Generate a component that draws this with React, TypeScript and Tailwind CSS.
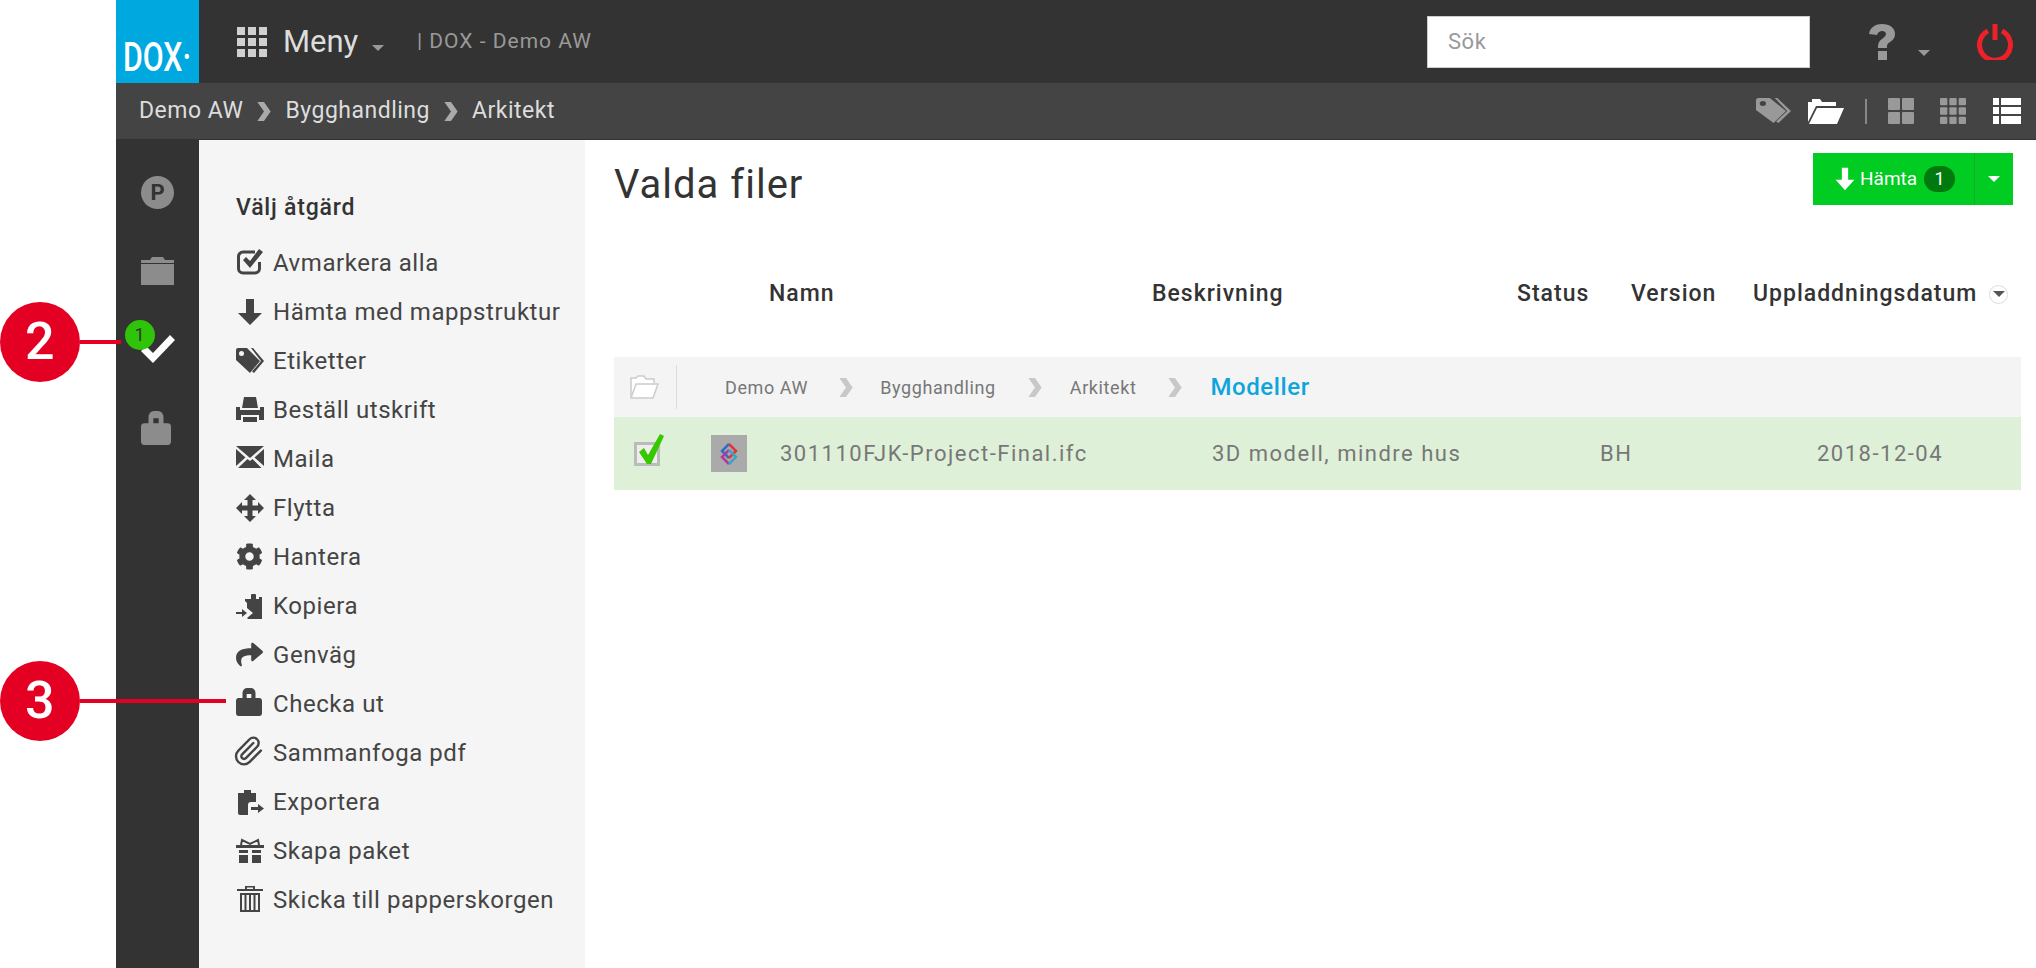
import type { ReactNode } from "react";
import { FaCog, FaShare } from "react-icons/fa";
import { Paperclip } from "lucide-react";

type Action = { label: string; icon: ReactNode };

function Glyph({ children, className = "h-7 w-7" }: { children: ReactNode; className?: string }) {
  return (
    <svg viewBox="0 0 28 28" preserveAspectRatio="none" fill="currentColor" className={"block shrink-0 " + className}>
      {children}
    </svg>
  );
}

const LockIcon = ({ className }: { className?: string }) => (
  <Glyph className={className}>
    <path
      d="M7 10V5a5 5 0 0 1 5-5h4a5 5 0 0 1 5 5v5h4a3 3 0 0 1 3 3v12a3 3 0 0 1-3 3H3a3 3 0 0 1-3-3V13a3 3 0 0 1 3-3Zm4.500 0h5V6h-5Z"
      fillRule="evenodd"
    />
  </Glyph>
);

const DownArrow = ({ className }: { className?: string }) => (
  <Glyph className={className}>
    <path d="M10 1h8v14h8L14 27 2 15h8Z" />
  </Glyph>
);

const TagsIcon = ({ className }: { className?: string }) => (
  <Glyph className={className}>
    <path d="M0 3a2 2 0 0 1 2-2h9l13 13-10 12L0 13Zm5.500 1a2.500 2.500 0 1 0 0 5 2.500 2.500 0 0 0 0-5Z" fillRule="evenodd" />
    <path d="M15 1h2l11 13-10 12-2-1.500L25 14Z" />
  </Glyph>
);

const actions: Action[] = [
  {
    label: "Avmarkera alla",
    icon: (
      <Glyph className="-mt-1 h-7 w-7">
        <path d="M19 5H7a4.500 4.500 0 0 0-4.500 4.500v12A4.500 4.500 0 0 0 7 26h12a4.500 4.500 0 0 0 4.500-4.500V15" fill="none" stroke="currentColor" strokeWidth="3" />
        <path d="M7 13l3-3 4 4 9-12 4 3-13 16Z" />
      </Glyph>
    ),
  },
  { label: "Hämta med mappstruktur", icon: <DownArrow /> },
  { label: "Etiketter", icon: <TagsIcon /> },
  {
    label: "Beställ utskrift",
    icon: (
      <Glyph>
        <path d="M8 1h12l2 11H6Z" />
        <path d="M0 11h4v3h20v-3h4v13h-5v-5H5v5H0Z" />
        <path d="M7 21h14v5H7Z" />
      </Glyph>
    ),
  },
  {
    label: "Maila",
    icon: (
      <Glyph>
        <path d="M0 1h28L14 13Z" />
        <path d="M0 4l9.500 8.500L0 21Z" />
        <path d="M28 4l-9.500 8.500L28 21Z" />
        <path d="M11.500 14l2.500 2 2.500-2 9 9H2Z" />
      </Glyph>
    ),
  },
  {
    label: "Flytta",
    icon: (
      <Glyph>
        <path d="M14 0l6 6h-3.500v5.500H22V8l6 6-6 6v-3.500h-5.500V22H20l-6 6-6-6h3.500v-5.500H6V20l-6-6 6-6v3.500h5.500V6H8Z" />
      </Glyph>
    ),
  },
  { label: "Hantera", icon: <FaCog className="h-[27px] w-[27px]" /> },
  {
    label: "Kopiera",
    icon: (
      <Glyph>
        <path d="M9 7h6V3a1 1 0 0 1 1-1h3a1 1 0 0 1 1 1v4h3V5h3v22H12l-1-1 6-5-6-5V11L9 9Z" />
        <path d="M0 20h6v-3l5 4-5 4v-3H0Z" />
      </Glyph>
    ),
  },
  { label: "Genväg", icon: <FaShare className="h-[27px] w-[27px]" /> },
  { label: "Checka ut", icon: <LockIcon className="-mt-1 h-7 w-[26px]" /> },
  { label: "Sammanfoga pdf", icon: <Paperclip className="-ml-1 -mt-1 h-8 w-8" strokeWidth={1.8} /> },
  {
    label: "Exportera",
    icon: (
      <Glyph>
        <path d="M2 5h6V2h7v3h5v9h-5a3 3 0 0 0-3 3v10H4a2 2 0 0 1-2-2Z" />
        <path d="M15 19h7v-3l6 4.500-6 4.500v-3h-7Z" />
      </Glyph>
    ),
  },
  {
    label: "Skapa paket",
    icon: (
      <Glyph>
        <path d="M0 8h28v3H0Z" />
        <path d="M3 13h9v3H3ZM16 13h9v3h-9ZM3 18h9v8H3ZM16 18h9v8h-9Z" />
        <path d="M5 8l1-5 8 4 8-4 1 5" fill="none" stroke="currentColor" strokeWidth="2" />
      </Glyph>
    ),
  },
  {
    label: "Skicka till papperskorgen",
    icon: (
      <Glyph className="-mt-1 h-7 w-7">
        <path d="M1 5h8V2h10v3h8v2H1ZM11 3.500V5h6V3.500Z" fillRule="evenodd" />
        <path d="M4 9h20v19H4Zm2 2v15h2.500V11Zm4.500 0v15H13V11Zm4.500 0v15h2.500V11Zm4.500 0v15H22V11Z" fillRule="evenodd" />
      </Glyph>
    ),
  },
];

function Caret({ className }: { className: string }) {
  return <span className={"block h-0 w-0 border-x-[6px] border-t-[6px] border-x-transparent " + className} />;
}

function Chevron({ className }: { className: string }) {
  return (
    <svg viewBox="0 0 14 20" className={"block h-[19px] w-[14px] shrink-0 " + className} fill="currentColor">
      <path d="M0 0h7l7 10-7 10H0l7-10Z" />
    </svg>
  );
}

function GridIcon({ n, className }: { n: number; className: string }) {
  const size = 26;
  const gap = 2;
  const cell = (size - gap * (n - 1)) / n;
  const cells = [];
  for (let r = 0; r < n; r++) {
    for (let c = 0; c < n; c++) {
      cells.push(<rect key={r + "-" + c} x={c * (cell + gap)} y={r * (cell + gap)} width={cell} height={cell} rx="1" />);
    }
  }
  return (
    <svg viewBox="0 0 26 26" fill="currentColor" className={"block h-[26px] w-[26px] " + className}>
      {cells}
    </svg>
  );
}

function Callout({ n, lineWidth, className }: { n: number; lineWidth: string; className: string }) {
  return (
    <div className={"absolute left-0 z-10 flex items-center " + className}>
      <div className="flex h-20 w-20 items-center justify-center rounded-full bg-[#e30022] text-[52px] font-medium leading-none text-white">
        {n}
      </div>
      <div className={"h-1 bg-[#e30022] " + lineWidth} />
    </div>
  );
}

export default function App() {
  return (
    <div className="relative flex h-[968px] w-[2036px] overflow-hidden whitespace-nowrap bg-white font-['Roboto','Liberation_Sans',sans-serif] tracking-[0.55px] text-[#333]">
      <Callout n={2} lineWidth="w-[41px]" className="top-[302px]" />
      <Callout n={3} lineWidth="w-[146px]" className="top-[661px]" />

      <div className="ml-[116px] flex min-w-0 flex-1 flex-col">
        <header className="flex h-[83px] items-center bg-[#333] pr-[23px]">
          <div className="flex h-[83px] w-[83px] items-end justify-center overflow-hidden bg-[#00a8e0] pb-[6px] text-[41px] font-medium leading-[40px] tracking-[0px] text-white">
            <span className="inline-block scale-x-[0.74]">DOX·</span>
          </div>
          <svg viewBox="0 0 30 30" fill="#d0d0d0" className="ml-[38px] block h-[30px] w-[30px]">
            <path d="M0 0h8v8H0ZM11 0h8v8h-8ZM22 0h8v8h-8ZM0 11h8v8H0ZM11 11h8v8h-8ZM22 11h8v8h-8ZM0 22h8v8H0ZM11 22h8v8h-8ZM22 22h8v8h-8Z" />
          </svg>
          <span className="ml-4 w-[73px] text-[31px] leading-none tracking-[0px] text-[#ddd]">Meny</span>
          <Caret className="ml-4 mt-[12px] border-t-[#999]" />
          <span className="ml-[33px] text-[21px] leading-none tracking-[1px] text-[#999]">| DOX - Demo AW</span>

          <div className="ml-auto flex h-[52px] w-[383px] items-center border border-[#ccc] bg-white pl-[20px] text-[22px] text-[#999]">
            Sök
          </div>
          <svg viewBox="0 0 28 36" fill="#999" className="ml-[58px] block h-9 w-7">
            <path d="M1 10C2 3 8 0 14 0c8 0 13 4 13 10 0 4-2 6-5 8-3 2-3 3-3 6h-9c0-5 1-7 4-9 2-2 4-3 4-5s-2-3-4-3-4 1-5 4ZM10 27h9v9h-9Z" />
          </svg>
          <Caret className="ml-[22px] mt-[22px] border-t-[#999]" />
          <svg viewBox="0 0 36 36" fill="none" stroke="#ee2028" strokeWidth="5" className="ml-[47px] block h-9 w-9">
            <path d="M11 7a15.500 15.500 0 1 0 14 0" />
            <path d="M18 0v16" />
          </svg>
        </header>

        <div className="flex h-[57px] items-center border-b border-[#333] bg-[#444] pl-[23px] pr-[15px] text-[23px] tracking-[0.5px] text-[#ddd]">
          <span>Demo AW</span>
          <Chevron className="mx-[14px] text-[#aaa]" />
          <span>Bygghandling</span>
          <Chevron className="mx-[14px] text-[#aaa]" />
          <span>Arkitekt</span>
          <div className="ml-auto flex items-center">
            <TagsIcon className="h-[28px] w-[35px] text-[#999]" />
            <svg viewBox="0 0 36 26" fill="white" className="ml-[17px] block h-[26px] w-9">
              <path d="M0 4h4V1h8l2 3h14v4H8L0 24Z" />
              <path d="M9 10h27l-7 16H1Z" />
            </svg>
            <span className="ml-[21px] h-[25px] w-[2px] bg-[#888]" />
            <GridIcon n={2} className="ml-[21px] text-[#999]" />
            <GridIcon n={3} className="ml-[26px] text-[#999]" />
            <svg viewBox="0 0 28 26" fill="white" className="ml-[27px] block h-[26px] w-7">
              <path d="M0 0h6v7H0ZM8 0h20v7H8ZM0 9h6v7H0ZM8 9h20v7H8ZM0 18h6v8H0ZM8 18h20v8H8Z" />
            </svg>
          </div>
        </div>

        <div className="flex min-h-0 flex-1">
          <nav className="flex w-[83px] shrink-0 flex-col items-center bg-[#333] pt-[36px] text-[#8c8c8c]">
            <div className="flex h-[33px] w-[33px] items-center justify-center rounded-full bg-[#8c8c8c] text-[22px] font-bold leading-none tracking-normal text-[#333]">
              P
            </div>
            <svg viewBox="0 0 33 30" fill="currentColor" className="mt-[46px] block h-[30px] w-[33px]">
              <path d="M11 2h11l2 3h9v3H0V5h9Z" />
              <path d="M0 9h33v21H0Z" />
            </svg>
            <div className="relative mt-[50px] h-[28px] w-[34px]">
              <svg viewBox="0 0 34 28" fill="white" className="block h-[28px] w-[34px]">
                <path d="M0 16l5-5 7 7L29 0l5 5-22 23Z" />
              </svg>
              <span className="absolute left-[-16px] top-[-15px] flex h-[30px] w-[30px] items-center justify-center rounded-full bg-[#2fc40a] text-[18px] leading-none tracking-normal text-[#333]">
                1
              </span>
            </div>
            <LockIcon className="ml-[-3px] mt-[48px] h-[34px] w-[30px]" />
          </nav>

          <aside className="w-[386px] shrink-0 bg-[#f5f5f5] pl-[37px] pt-[53px]">
            <h2 className="text-[23px] font-medium leading-[30px] tracking-[0.8px] text-[#333]">Välj åtgärd</h2>
            <ul className="mt-[15px]">
              {actions.map((action) => (
                <li key={action.label} className="flex h-[49px] items-center text-[24px] text-[#444]">
                  <span className="flex w-[37px] shrink-0 justify-start">{action.icon}</span>
                  {action.label}
                </li>
              ))}
            </ul>
          </aside>

          <main className="min-w-0 flex-1 pl-[29px] pr-[15px]">
            <div className="flex items-start justify-between pt-[13px]">
              <h1 className="mt-[7px] text-[40px] font-normal leading-[50px] tracking-[1px] text-[#333]">Valda filer</h1>
              <div className="mr-2 flex h-[52px] w-[200px] bg-[#00cc22] text-white">
                <div className="flex flex-1 items-center border-r border-[#17a82e] pl-[21px]">
                  <DownArrow className="h-[24px] w-[22px]" />
                  <span className="ml-[4px] text-[19px] tracking-[0px]">Hämta</span>
                  <span className="ml-[7px] flex h-[26px] w-[31px] items-center justify-center rounded-full bg-[#007a0e] text-[18px] leading-none tracking-normal">1</span>
                </div>
                <div className="flex w-[38px] items-center justify-center">
                  <Caret className="border-t-white" />
                </div>
              </div>
            </div>

            <div className="mt-[68px] flex h-[32px] items-center text-[23px] font-medium tracking-[1px] text-[#333]">
              <span className="ml-[155px] w-[383px]">Namn</span>
              <span className="w-[365px]">Beskrivning</span>
              <span className="w-[114px]">Status</span>
              <span className="w-[122px]">Version</span>
              <span>Uppladdningsdatum</span>
              <span className="ml-3 flex h-[19px] w-[19px] items-center justify-center rounded-full border border-[#ddd]">
                <Caret className="border-x-[5px] border-t-[6px] border-t-[#555]" />
              </span>
            </div>

            <div className="mt-[47px] flex h-[60px] items-center bg-[#f4f4f4] text-[18px] tracking-[0.6px] text-[#777]">
              <svg viewBox="0 0 30 24" className="ml-[15px] block h-6 w-[30px]" fill="white" stroke="#ccc" strokeWidth="1.500">
                <path d="M2 22V3h5l2-2h6l2 3h8v4" />
                <path d="M7 9h22l-5 14H2Z" />
              </svg>
              <span className="ml-[17px] h-[44px] w-px bg-[#ddd]" />
              <span className="ml-[48px]">Demo AW</span>
              <Chevron className="ml-[31px] mr-[27px] text-[#c8c8c8]" />
              <span>Bygghandling</span>
              <Chevron className="ml-[32px] mr-[28px] text-[#c8c8c8]" />
              <span>Arkitekt</span>
              <Chevron className="ml-[32px] mr-[28px] text-[#c8c8c8]" />
              <span className="text-[24px] font-medium text-[#0ea5dc]">Modeller</span>
            </div>

            <div className="flex h-[73px] items-center bg-[#dff0d8] text-[22px] tracking-[1.5px] text-[#777]">
              <div className="relative ml-5 h-[24px] w-[26px] border-[3px] border-[#bbb] bg-[#eee]">
                <svg viewBox="0 0 26 32" fill="#37c800" className="absolute bottom-[-3px] left-[2px] block h-[32px] w-[26px]">
                  <path d="M0 18l5-4 4 7L21 0l4 2-13 28H8Z" />
                </svg>
              </div>
              <div className="ml-[51px] flex h-[37px] w-[36px] items-center justify-center bg-[#aaa]">
                <svg viewBox="0 0 20 24" fill="none" strokeWidth="2.500" className="block h-6 w-5">
                  <path d="M10 2L3 9l7 7" stroke="#2f6fc4" />
                  <path d="M10 2l7 7-7 7" stroke="#e0353b" />
                  <path d="M10 8l-7 7 7 7" stroke="#b03a9c" />
                  <path d="M10 8l7 7-7 7" stroke="#3ca3c8" />
                </svg>
              </div>
              <span className="ml-[33px] w-[432px]">301110FJK-Project-Final.ifc</span>
              <span className="w-[388px]">3D modell, mindre hus</span>
              <span className="w-[217px]">BH</span>
              <span>2018-12-04</span>
            </div>
          </main>
        </div>
      </div>
    </div>
  );
}
